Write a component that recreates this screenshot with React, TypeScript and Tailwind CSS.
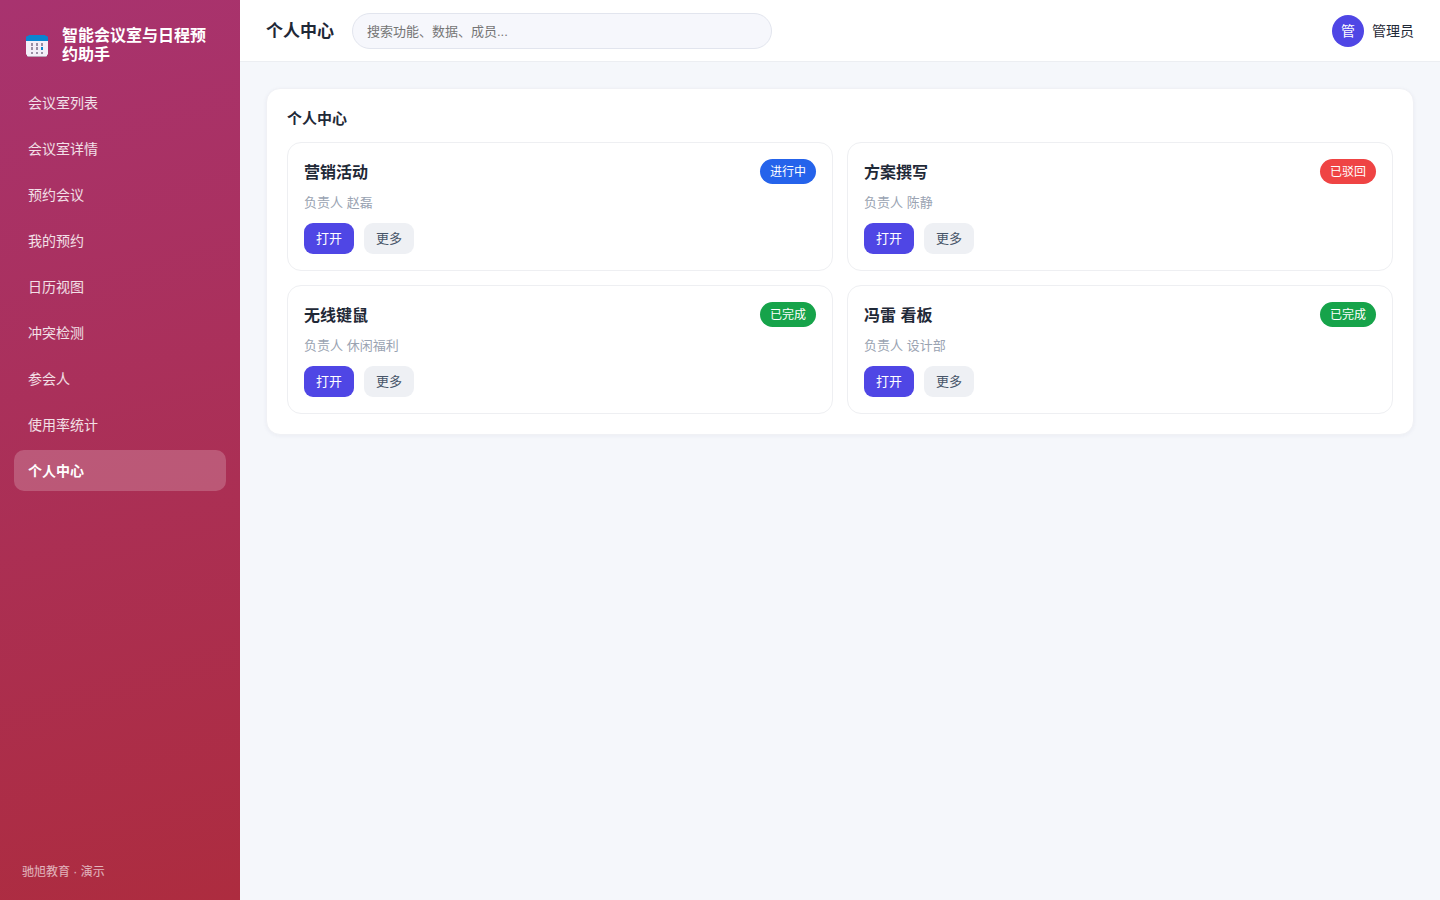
import { useState } from "react";
import clsx from "clsx";

const navItems = [
  "会议室列表",
  "会议室详情",
  "预约会议",
  "我的预约",
  "日历视图",
  "冲突检测",
  "参会人",
  "使用率统计",
  "个人中心",
];

const cards = [
  { title: "营销活动", owner: "赵磊", status: "进行中" },
  { title: "方案撰写", owner: "陈静", status: "已驳回" },
  { title: "无线键鼠", owner: "休闲福利", status: "已完成" },
  { title: "冯雷 看板", owner: "设计部", status: "已完成" },
];

const statusColors: Record<string, string> = {
  进行中: "bg-[#2563eb]",
  已驳回: "bg-[#ef4444]",
  已完成: "bg-[#16a34a]",
};

function CalendarIcon() {
  return (
    <svg width="22" height="22" viewBox="0 0 22 22" className="shrink-0" aria-hidden="true">
      <path d="M0 5h22v14l-1 1v1l-1 1H2l-1-1v-1l-1-1z" fill="#b9a5b8" />
      <path d="M0 5h22v14l-1 1v1H1v-1l-1-1z" fill="#f3eef8" />
      <path d="M0 6V2l1-1h1l1-1h16l1 1h1l1 1v4z" fill="#0a84d0" />
      <g fill="#998ea4">
        <path d="M5 8h2v3H5zM10 8h2v3h-2zM15 8h2v3h-2z" />
        <path d="M5 12h2v3H5zM10 12h2v3h-2z" />
        <path d="M5 17h2v2H5zM10 17h2v2h-2zM15 17h2v2h-2z" />
      </g>
      <path d="M15 12h2v3h-2z" fill="#0a84d0" />
    </svg>
  );
}

function Sidebar({ active, onSelect }: { active: string; onSelect: (name: string) => void }) {
  return (
    <aside className="flex w-60 shrink-0 flex-col bg-[linear-gradient(165deg,#a8336f,#ad2c3f)] px-[14px] pt-6 pb-5 text-white">
      <div className="flex items-center gap-[14px] px-3 pt-0.5">
        <CalendarIcon />
        <div className="pb-0.5 text-[16px] leading-[19px] font-bold">智能会议室与日程预约助手</div>
      </div>
      <nav className="mt-4 flex flex-col gap-[5px]">
        {navItems.map((name) => (
          <button
            key={name}
            type="button"
            onClick={() => onSelect(name)}
            className={clsx(
              "h-[41px] cursor-pointer rounded-[10px] px-[14px] pt-0.5 text-left text-[14px]",
              name === active ? "bg-white/20 font-bold" : "text-white/85 hover:bg-white/10"
            )}
          >
            {name}
          </button>
        ))}
      </nav>
      <div className="mt-auto px-2 text-[12px] leading-4 text-white/65">驰旭教育 · 演示</div>
    </aside>
  );
}

function ProjectCard({ card }: { card: (typeof cards)[number] }) {
  return (
    <article className="rounded-[14px] border border-[#eeeff2] p-4">
      <div className="flex items-start justify-between">
        <h3 className="text-[16px] leading-7 font-bold">{card.title}</h3>
        <span className={clsx("rounded-full px-[10px] pt-px text-[12px] leading-6 text-white", statusColors[card.status])}>
          {card.status}
        </span>
      </div>
      <p className="mt-1.5 text-[13px] leading-5 text-[#9aa3b2]">负责人 {card.owner}</p>
      <div className="mt-[10px] flex gap-[10px]">
        <button type="button" className="h-[31px] cursor-pointer rounded-[9px] bg-[#4f46e5] px-3 text-[13px] text-white">
          打开
        </button>
        <button type="button" className="h-[31px] cursor-pointer rounded-[9px] bg-[#eef0f4] px-3 text-[13px] text-[#475569]">
          更多
        </button>
      </div>
    </article>
  );
}

export default function App() {
  const [active, setActive] = useState("个人中心");

  return (
    <div className="flex min-h-screen bg-[#f5f7fb] font-['Liberation_Sans','Noto_Sans_CJK_SC',sans-serif] text-[#1f2937]">
      <Sidebar active={active} onSelect={setActive} />
      <div className="min-w-0 flex-1">
        <header className="flex items-center border-b border-[#eceef2] bg-white px-[26px] pt-[13px] pb-3">
          <h1 className="pt-0.5 text-[17px] leading-6 font-bold">{active}</h1>
          <input
            type="search"
            aria-label="搜索"
            placeholder="搜索功能、数据、成员..."
            className="ml-[18px] h-9 w-full max-w-[420px] rounded-full border border-[#e2e5ee] bg-[#f6f7fc] px-[14px] text-[13px] outline-none placeholder:text-[#757575]"
          />
          <div className="ml-auto flex shrink-0 items-center gap-2 pl-4 text-[14px]">
            <span className="flex size-8 items-center justify-center rounded-full bg-[#4f46e5] text-white">管</span>
            <span>管理员</span>
          </div>
        </header>
        <main className="p-[26px]">
          <section className="rounded-[14px] border border-[#f0f1f5] bg-white p-5 shadow-[0_1px_4px_rgba(30,41,90,0.05)]">
            <h2 className="mb-[13px] text-[15px] leading-5 font-bold">个人中心</h2>
            <div className="grid grid-cols-2 gap-[14px]">
              {cards.map((card) => (
                <ProjectCard key={card.title} card={card} />
              ))}
            </div>
          </section>
        </main>
      </div>
    </div>
  );
}
